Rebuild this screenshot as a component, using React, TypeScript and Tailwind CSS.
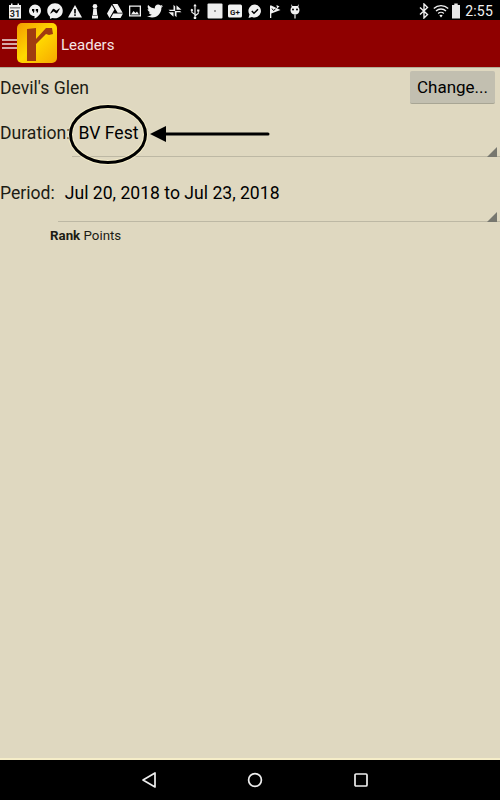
import React from 'react';
import { FaTwitter, FaFacebookMessenger, FaGoogleDrive } from 'react-icons/fa';

const Box: React.FC<{ children: React.ReactNode }> = ({ children }) => (
  <svg width="16" height="16" viewBox="0 0 16 16" fill="#f2f2f2">
    {children}
  </svg>
);

const StatusIcons = () => (
  <div className="flex items-center gap-1 pt-px pl-[7px] text-[#f2f2f2]">
    {/* calendar */}
    <svg width="16" height="16" viewBox="0 0 16 16">
      <rect x="2" y="2" width="12" height="13.500" fill="#f2f2f2" />
      <rect x="4" y="0.500" width="1.500" height="3" fill="#f2f2f2" />
      <rect x="10.500" y="0.500" width="1.500" height="3" fill="#f2f2f2" />
      <rect x="3" y="4.500" width="10" height="0.800" fill="#333" />
      <text x="8" y="14" textAnchor="middle" fontSize="9" fontWeight="700" fill="#222" fontFamily="Roboto, sans-serif">
        31
      </text>
    </svg>
    {/* hangouts */}
    <Box>
      <path d="M8 1.500a6.200 6.200 0 0 0-6 6.200c0 3.300 2.700 5.300 5.500 5.300v2.500c3.300-1.500 6.500-4.500 6.500-7.800a6.100 6.100 0 0 0-6-6.200z" />
      <path d="M5 6h2.300v2.300c0 .9-.5 1.500-1.300 1.700v-1.700H5zM8.800 6h2.300v2.300c0 .9-.5 1.500-1.300 1.700v-1.700H8.800z" fill="#000" />
    </Box>
    <FaFacebookMessenger size={16} />
    {/* warning */}
    <Box>
      <path d="M8 2l7 12.500H1z" />
      <rect x="7.200" y="6" width="1.600" height="4.500" fill="#000" />
      <rect x="7.200" y="11.300" width="1.600" height="1.600" fill="#000" />
    </Box>
    {/* pawn */}
    <Box>
      <circle cx="8" cy="3.200" r="2.300" />
      <path d="M6.300 5.500h3.400l.6 6.500H5.700zM5 12.500h6V15.500H5z" />
    </Box>
    <FaGoogleDrive size={16} />
    {/* photo */}
    <Box>
      <path d="M2 2.500h12v11H2zM3.300 3.800v8.400h9.400V3.800z" fillRule="evenodd" />
      <path d="M4 11.500l2.500-3.500 2 2 1.500-1.500 2 3z" />
    </Box>
    <FaTwitter size={16} />
    {/* arrows */}
    <Box>
      <path d="M1.500 6.800h5V1.800L8.200 3.500v4.600H3zM14.500 9.200h-5v5L7.800 12.500V7.900H13zM9.500 2.200L14.500 6.800H9.500zM6.500 13.800L1.500 9.200h5z" />
    </Box>
    {/* usb */}
    <Box>
      <path d="M8 .8l1.700 2.500H8.600v8.300l2.200-1.700V8.500h-.7V6.500h2.300v2h-.7v2.200L8.600 13.200v.5a1.300 1.300 0 1 1-1.200 0v-2L4.300 9.500V8a1.100 1.100 0 1 1 1.100 0v1l2 1.500V3.300H6.300z" />
    </Box>
    {/* grey notification */}
    <svg width="16" height="16" viewBox="0 0 16 16">
      <rect x="0.500" y="0.500" width="15" height="15" rx="1" fill="#ececec" />
      <rect x="7" y="7" width="2" height="2" fill="#999" />
    </svg>
    {/* google plus */}
    <svg width="16" height="16" viewBox="0 0 16 16">
      <rect x="1" y="1.500" width="14" height="13" rx="1.500" fill="#f2f2f2" />
      <text x="8" y="11.500" textAnchor="middle" fontSize="8" fontWeight="700" fill="#111" fontFamily="Roboto, sans-serif">
        G+
      </text>
    </svg>
    {/* chat check */}
    <Box>
      <path d="M8 1.500a6.500 6.500 0 0 0-5.500 10L1.500 15l3.500-1A6.500 6.500 0 1 0 8 1.500z" />
      <path d="M4.800 8l2.200 2.200 4-4" fill="none" stroke="#000" strokeWidth="1.500" />
    </Box>
    {/* flag check */}
    <Box>
      <path d="M3 2.500h1.300L13.500 7 4.300 10.500V15H3z" />
      <path d="M5 5.500l1.500 2 2-1.500" stroke="#000" fill="none" />
      <path d="M9.500 2l3 1.500-2.500 2z" />
    </Box>
    {/* android */}
    <Box>
      <path d="M4 1l1.500 2h5L12 1l-.7 3a4.500 4.500 0 0 1 1.200 3.500A4.500 4.500 0 0 1 8 11.500a4.500 4.500 0 0 1-4.500-4A4.500 4.500 0 0 1 4.700 4z" />
      <circle cx="6" cy="6.500" r="1" fill="#000" />
      <circle cx="10" cy="6.500" r="1" fill="#000" />
      <rect x="7.400" y="11.500" width="1.200" height="4" />
    </Box>
  </div>
);

const SystemIcons = () => (
  <div className="flex items-center pt-px pr-[7px] text-[#f2f2f2]">
    <svg width="12" height="16" viewBox="0 0 12 16" fill="none" stroke="#f2f2f2" strokeWidth="1.400" className="mr-[3px]">
      <path d="M2 4.500l7.500 7L6 15V1l3.500 3.500L2 11.500" />
    </svg>
    <svg width="16" height="14" viewBox="0 0 16 14" fill="none" stroke="#f2f2f2" strokeWidth="1.300" className="mr-[2px]">
      <path d="M.8 4.500a10.500 10.500 0 0 1 14.400 0M3 7a7.300 7.300 0 0 1 10 0M5.200 9.500a4 4 0 0 1 5.600 0" />
      <path d="M8 13.500l-1.600-2a2.400 2.400 0 0 1 3.200 0z" fill="#f2f2f2" stroke="none" />
    </svg>
    <svg width="10" height="16" viewBox="0 0 10 16" className="mr-[4px]">
      <path d="M3.300 0.500h3.400v1.500H9V15.500H1V2h2.300z" fill="#e8e8e8" />
    </svg>
    <span className="text-[14px] leading-5 tracking-[0.2px]">2:55</span>
  </div>
);

const Spinner: React.FC<{ label: string; value: string; rule: string; gap: string }> = ({ label, value, rule, gap }) => (
  <div className="relative">
    <div className={`flex items-center text-[17.6px] leading-5 ${gap}`}>
      <span className="text-[#1c1c14]">{label}</span>
      <span className="text-black">{value}</span>
    </div>
    <div className={`${rule} h-px bg-[#bdb8a4]`} />
    <div className="absolute right-[3px] bottom-0 h-0 w-0 border-b-[10px] border-l-[10px] border-b-[#77776f] border-l-transparent" />
  </div>
);

export default function App() {
  return (
    <div className="flex h-[800px] w-[500px] flex-col overflow-hidden bg-[#dfd8c0] font-['Roboto',sans-serif]">
      {/* Status bar */}
      <div className="flex h-5 items-center justify-between bg-black">
        <StatusIcons />
        <SystemIcons />
      </div>

      {/* App bar */}
      <div className="flex h-[48px] items-center border-b border-[#b5ae98] bg-[#8f0000]">
        <div className="ml-[2px] flex w-[15px] flex-col gap-[2px]">
          <div className="h-[2px] bg-[#d6a8a8]" />
          <div className="h-[2px] bg-[#d6a8a8]" />
          <div className="h-[2px] bg-[#d6a8a8]" />
        </div>
        <svg width="40" height="40" viewBox="0 0 40 40" className="mt-[-2px]">
          <defs>
            <linearGradient id="logoBg" x1="0" y1="0" x2="1" y2="1">
              <stop offset="0" stopColor="#f39a00" />
              <stop offset="0.5" stopColor="#ffd800" />
              <stop offset="1" stopColor="#f7a800" />
            </linearGradient>
          </defs>
          <rect x="0" y="0" width="40" height="40" rx="5" fill="url(#logoBg)" />
          <path d="M10 6l9-1v11L29 5h6l1 6-4 1-3-1-10 10v17h-9z" fill="#a03c10" />
        </svg>
        <span className="mt-[4px] ml-[4px] text-[15px] text-[#f6e6e6]">Leaders</span>
      </div>

      {/* Content */}
      <div className="relative flex-1 border-b-2 border-[#f5edc8]">
        <div className="flex items-start justify-between pt-[3px] pr-[5px]">
          <span className="pt-[7px] text-[17.6px] leading-5 text-[#1c1c14]">Devil's Glen</span>
          <div className="flex h-[33px] w-[85px] items-center justify-center rounded-[2px] border-b border-[#a8a594] bg-[#c2bfb0] pt-[2px] text-[17px] text-black">
            Change...
          </div>
        </div>

        <div className="mt-[19px]">
          <Spinner label="Duration:" value="BV Fest" rule="mt-[13px] ml-[72px]" gap="gap-[8px]" />
        </div>
        <div className="mt-[26px]">
          <Spinner label="Period:" value="Jul 20, 2018 to Jul 23, 2018" rule="mt-[18px] ml-[58px]" gap="gap-[10px]" />
        </div>

        <div className="mt-[6px] pl-[50px] text-[13.3px] leading-4 text-[#1c1c14]">
          <span className="font-bold">Rank</span> <span>Points</span>
        </div>

        {/* Hand-drawn annotation over the screenshot */}
        <svg width="210" height="70" viewBox="0 0 210 70" fill="none" className="absolute top-[32px] left-[65px]">
          <ellipse cx="43" cy="34.500" rx="37.500" ry="28" stroke="#f5edc8" strokeWidth="5" />
          <ellipse cx="43" cy="34.500" rx="37.500" ry="28" stroke="#000" strokeWidth="3" />
          <path d="M100 34h103" stroke="#000" strokeWidth="3" strokeLinecap="round" />
          <path d="M85 34l16-8v16z" fill="#000" />
        </svg>
      </div>

      {/* Nav bar */}
      <div className="flex h-[40px] items-center justify-center bg-black">
        <div className="ml-[10px] flex w-[228px] items-center justify-between">
          <svg width="16" height="18" viewBox="0 0 16 18" fill="none" stroke="#eee" strokeWidth="1.700" strokeLinejoin="round">
            <path d="M14 2v14L2 9z" />
          </svg>
          <svg width="16" height="16" viewBox="0 0 16 16" fill="none" stroke="#eee" strokeWidth="1.700">
            <circle cx="8" cy="8" r="6.400" />
          </svg>
          <svg width="16" height="16" viewBox="0 0 16 16" fill="none" stroke="#eee" strokeWidth="1.700">
            <rect x="2" y="2" width="12" height="12" rx="1" />
          </svg>
        </div>
      </div>
    </div>
  );
}
